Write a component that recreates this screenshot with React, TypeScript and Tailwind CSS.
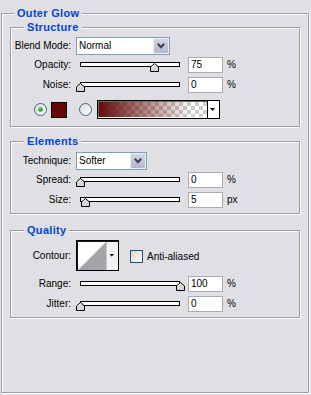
import React from "react";

const groove = "border border-[#9d9da1] shadow-[inset_1px_1px_0_#fff,1px_1px_0_#fff]";

function Legend({ children, left }: { children: React.ReactNode; left: string }) {
  return (
    <span
      className={`absolute top-[-7px] ${left} px-[3px] bg-[#e0dfe3] text-[#0046d5] font-bold text-[11px] leading-[13px] tracking-[0.3px] whitespace-nowrap`}
    >
      {children}
    </span>
  );
}

function Label({ children }: { children: React.ReactNode }) {
  return <div className="w-[60px] shrink-0 text-right text-[10px] leading-[12px] text-black">{children}</div>;
}

function Chevron() {
  return (
    <svg width="8" height="6" viewBox="0 0 8 6">
      <polyline points="0.8,0.8 4,4.2 7.2,0.8" fill="none" stroke="#3a3f52" strokeWidth="2" />
    </svg>
  );
}

function Combo({ value, width }: { value: string; width: string }) {
  return (
    <div className={`ml-[5px] flex h-[18px] ${width} border border-[#7f9db9] bg-white`}>
      <div className="flex-1 pl-[2px] text-[10px] leading-[16px] text-black">{value}</div>
      <div className="flex w-[16px] items-center justify-center border border-[#eef0f6] bg-linear-to-b from-[#d4d6e4] to-[#b4b7cc]">
        <Chevron />
      </div>
    </div>
  );
}

function Thumb() {
  return (
    <svg width="9" height="9" viewBox="0 0 9 9">
      <path d="M0.5 4 L4.5 0.5 L8.5 4 V8.5 H0.5 Z" fill="#d6d6d6" stroke="#000" />
      <path d="M1.5 4.4 L4.5 1.8" stroke="#fff" fill="none" />
    </svg>
  );
}

function SliderRow({
  label,
  pos,
  value,
  unit,
  mt,
}: {
  label: string;
  pos: number;
  value: string;
  unit: string;
  mt: string;
}) {
  return (
    <div className={`flex h-[16px] items-center ${mt}`}>
      <Label>{label}</Label>
      <div className="relative ml-[5px] h-[16px] w-[108px] shrink-0">
        <div className="mx-[4px] mt-[5px] h-[5px] w-[100px] border border-black bg-white" />
        <div className="absolute top-[6px] h-[9px] w-[9px]" style={{ left: pos }}>
          <Thumb />
        </div>
      </div>
      <div className="ml-[4px] h-[16px] w-[35px] shrink-0 border border-[#a5acb2] bg-white pl-[2px] text-[10px] leading-[14px] text-black">
        {value}
      </div>
      <div className="ml-[4px] text-[10px] leading-[12px] text-black">{unit}</div>
    </div>
  );
}

function Radio({ checked, id }: { checked: boolean; id: string }) {
  return (
    <svg width="13" height="13" viewBox="0 0 13 13" className="shrink-0">
      <defs>
        <linearGradient id={id} x1="0" y1="0" x2="1" y2="1">
          <stop offset="0" stopColor="#d8d8d4" />
          <stop offset="1" stopColor="#ffffff" />
        </linearGradient>
      </defs>
      <circle cx="6.5" cy="6.5" r="6" fill={`url(#${id})`} stroke="#3a6591" />
      {checked && <circle cx="6.5" cy="6.5" r="2.3" fill="#21a121" />}
      {checked && <circle cx="6" cy="6" r="0.9" fill="#7fe07f" />}
    </svg>
  );
}

function GradientPreview() {
  return (
    <svg width="123" height="19" viewBox="0 0 123 19" className="ml-[5px] shrink-0">
      <defs>
        <pattern id="chk" width="8" height="8" patternUnits="userSpaceOnUse" x="2" y="2">
          <rect width="8" height="8" fill="#ffffff" />
          <rect width="4" height="4" fill="#cdcdcd" />
          <rect x="4" y="4" width="4" height="4" fill="#cdcdcd" />
        </pattern>
        <linearGradient id="gr" x1="0" y1="0" x2="1" y2="0">
          <stop offset="0" stopColor="#640a0a" stopOpacity="1" />
          <stop offset="0.85" stopColor="#640a0a" stopOpacity="0" />
        </linearGradient>
      </defs>
      <rect x="0.5" y="0.5" width="122" height="18" fill="#fff" stroke="#000" />
      <rect x="2" y="2" width="108" height="15" fill="url(#chk)" />
      <rect x="2" y="2" width="108" height="15" fill="url(#gr)" />
      <path d="M1.5 17 V1.5 H110" stroke="#6a6a6a" fill="none" />
      <line x1="110.5" y1="1" x2="110.5" y2="18" stroke="#000" />
      <path d="M113 8 H118 L115.5 11 Z" fill="#000" />
    </svg>
  );
}

function Contour() {
  return (
    <svg width="43" height="31" viewBox="0 0 43 31" className="ml-[5px] shrink-0">
      <rect x="0.5" y="0.5" width="42" height="30" fill="#fff" stroke="#000" />
      <path d="M1.5 30 V1.5 H42" stroke="#1a1a1a" fill="none" />
      <polygon points="2,30 30,2 30,30" fill="#a4a4a8" />
      <rect x="31" y="2" width="11" height="28" fill="#f2f2f2" />
      <line x1="30.5" y1="2" x2="30.5" y2="30" stroke="#c8c8c8" />
      <path d="M33.5 14 H38 L35.75 16.5 Z" fill="#000" />
    </svg>
  );
}

export default function App() {
  return (
    <div className="h-[395px] w-[311px] overflow-hidden bg-[#e0dfe3] pl-[1px] pt-[13px] font-['Liberation_Sans',Arial,sans-serif]">
      <div className={`relative h-[380px] w-[308px] ${groove} pl-[8px] pt-[13px]`}>
        <Legend left="left-[12px]">Outer Glow</Legend>

        {/* Structure */}
        <div className={`relative h-[100px] w-[290px] ${groove} pt-[9px]`}>
          <Legend left="left-[13px]">Structure</Legend>
          <div className="flex h-[18px] items-center">
            <Label>Blend Mode:</Label>
            <Combo value="Normal" width="w-[94px]" />
          </div>
          <SliderRow label="Opacity:" pos={74} value="75" unit="%" mt="mt-[2px]" />
          <SliderRow label="Noise:" pos={0} value="0" unit="%" mt="mt-[4px]" />
          <div className="mt-[7px] flex h-[19px] items-center">
            <div className="ml-[23px]">
              <Radio checked id="r1" />
            </div>
            <div className="ml-[4px] h-[16px] w-[16px] shrink-0 border border-black bg-[#660606]" />
            <div className="ml-[12px]">
              <Radio checked={false} id="r2" />
            </div>
            <GradientPreview />
          </div>
        </div>

        {/* Elements */}
        <div className={`relative mt-[14px] h-[73px] w-[290px] ${groove} pt-[10px]`}>
          <Legend left="left-[13px]">Elements</Legend>
          <div className="flex h-[18px] items-center">
            <Label>Technique:</Label>
            <Combo value="Softer" width="w-[71px]" />
          </div>
          <SliderRow label="Spread:" pos={0} value="0" unit="%" mt="mt-[2px]" />
          <SliderRow label="Size:" pos={5} value="5" unit="px" mt="mt-[4px]" />
        </div>

        {/* Quality */}
        <div className={`relative mt-[16px] h-[88px] w-[290px] ${groove} pt-[9px]`}>
          <Legend left="left-[13px]">Quality</Legend>
          <div className="flex h-[31px] items-center">
            <Label>Contour:</Label>
            <Contour />
            <div className="ml-[11px] mt-[2px] h-[13px] w-[13px] shrink-0 border border-[#1c5180] bg-linear-to-br from-[#d6d6d0] to-white" />
            <div className="ml-[4px] mt-[2px] text-[10px] leading-[12px] text-black">Anti-aliased</div>
          </div>
          <SliderRow label="Range:" pos={100} value="100" unit="%" mt="mt-[5px]" />
          <SliderRow label="Jitter:" pos={0} value="0" unit="%" mt="mt-[4px]" />
        </div>
      </div>
    </div>
  );
}
